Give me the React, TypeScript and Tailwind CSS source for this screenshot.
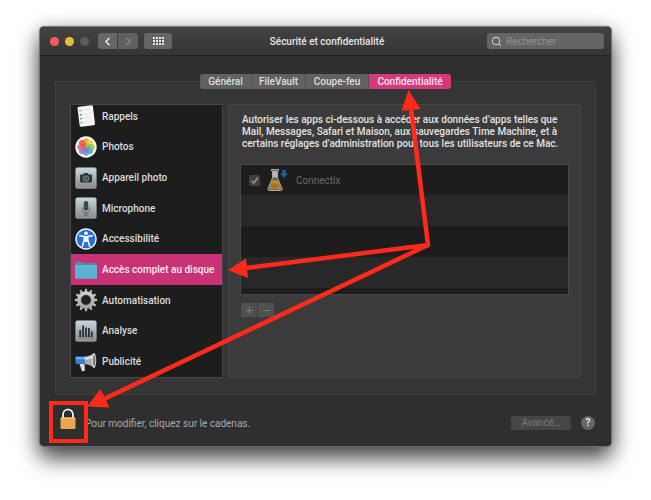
import { useId, useState, type ReactNode } from "react";
import { ChevronLeft, ChevronRight, Minus, Plus, Search } from "lucide-react";

const ONGLETS = [
  { nom: "Général", largeur: "w-[52px]" },
  { nom: "FileVault", largeur: "w-[54px]" },
  { nom: "Coupe-feu", largeur: "w-[63px]" },
  { nom: "Confidentialité", largeur: "w-[82px]" },
];

function IconeRappels() {
  return (
    <svg viewBox="0 0 24 24" className="size-6">
      <g transform="rotate(-7 12 12)">
        <rect x="4.5" y="2" width="15.5" height="20" rx="1.5" fill="#f6f6f4" />
        <path d="M9 6h8M9 10h8M9 14h8M9 18h8" stroke="#dcdcdc" strokeWidth=".7" />
        <circle cx="6.8" cy="6" r="1" fill="#ff9046" />
        <circle cx="6.8" cy="10" r="1" fill="#32a8ee" />
        <circle cx="6.8" cy="14" r="1" fill="#b06ae0" />
        <circle cx="6.8" cy="18" r="1" fill="#5ccb55" />
      </g>
    </svg>
  );
}

const PETALES = ["#f7a12b", "#d9d93a", "#8fc850", "#52b69a", "#5a92d6", "#8e77c4", "#cf6a9c", "#ee5a3c"];

function IconePhotos() {
  return (
    <svg viewBox="0 0 24 24" className="size-6">
      <circle cx="12" cy="12" r="10.7" fill="#f7f7f5" />
      {PETALES.map((couleur, i) => (
        <rect
          key={couleur}
          x="9.1"
          y="3.3"
          width="5.8"
          height="8.2"
          rx="2.9"
          fill={couleur}
          fillOpacity=".88"
          transform={`rotate(${i * 45} 12 12)`}
        />
      ))}
    </svg>
  );
}

function Tuile({ children }: { children: ReactNode }) {
  const id = useId();
  return (
    <svg viewBox="0 0 24 24" className="size-6">
      <defs>
        <linearGradient id={id} x1="0" y1="0" x2="0" y2="1">
          <stop offset="0" stopColor="#c8d7de" />
          <stop offset="1" stopColor="#85898a" />
        </linearGradient>
      </defs>
      <rect x="1.8" y="1.8" width="20.4" height="20.4" rx="1.5" fill={`url(#${id})`} stroke="#c0c9cc" strokeWidth=".6" />
      {children}
    </svg>
  );
}

function IconeAppareil() {
  return (
    <Tuile>
      <path d="M7 8.5h2.2l1-1.5h3.6l1 1.5H17a1 1 0 0 1 1 1v6a1 1 0 0 1-1 1H7a1 1 0 0 1-1-1v-6a1 1 0 0 1 1-1z" fill="#303638" />
      <circle cx="12" cy="12.4" r="3" fill="#8c9698" />
      <circle cx="12" cy="12.4" r="2.2" fill="#353b3d" />
      <circle cx="12" cy="12.4" r="1.1" fill="#707a7d" />
    </Tuile>
  );
}

function IconeMicrophone() {
  return (
    <Tuile>
      <rect x="9.8" y="5" width="4.4" height="9.5" rx="2.2" fill="#393d3f" />
      <path d="M10.5 7.5h3M10.5 9.5h3M10.5 11.5h3" stroke="#666d70" strokeWidth=".6" />
      <path d="M8.3 11.5v1.7a3.7 3.7 0 0 0 7.4 0v-1.7M12 17v2M9.5 19h5" fill="none" stroke="#5b6163" strokeWidth=".9" />
    </Tuile>
  );
}

function IconeAccessibilite() {
  return (
    <svg viewBox="0 0 24 24" className="size-6">
      <circle cx="12" cy="12" r="10.7" fill="#f2f7fc" />
      <circle cx="12" cy="12" r="9.3" fill="#286fdd" />
      <circle cx="12" cy="6.3" r="1.8" fill="#fff" />
      <path d="M5.8 8.7l4.4.7v3.5L8.4 19.2M18.2 8.7l-4.4.7v3.5l1.8 6.3" fill="none" stroke="#fff" strokeWidth="1.5" strokeLinecap="round" strokeLinejoin="round" />
      <path d="M10 9h4v4.5l-.8 1.5h-2.4L10 13.5z" fill="#fff" />
    </svg>
  );
}

function IconeDossier() {
  return (
    <svg viewBox="0 0 24 24" className="size-6">
      <path d="M1.2 5c0-.7.5-1.2 1.2-1.2h4.8c1 0 1.3 1.5 2.3 1.5h12c.7 0 1.2.5 1.2 1.2V9H1.2z" fill="#4394b4" />
      <path d="M1 7.5h22v12c0 .8-.5 1.3-1.3 1.3H2.3c-.8 0-1.3-.5-1.3-1.3z" fill="#5bb2d2" />
      <path d="M1 7.8h22" stroke="#7ac6de" strokeWidth=".7" />
    </svg>
  );
}

function IconeEngrenage() {
  const id = useId();
  return (
    <svg viewBox="0 0 24 24" className="size-6">
      <defs>
        <linearGradient id={id} gradientUnits="userSpaceOnUse" x1="0" y1="1" x2="0" y2="23">
          <stop offset="0" stopColor="#d8dee0" />
          <stop offset="1" stopColor="#969a9b" />
        </linearGradient>
      </defs>
      {Array.from({ length: 12 }, (_, i) => (
        <path key={i} d="M10.6 5L11.1.8h1.8l.5 4.2z" fill="#b9bfc1" transform={`rotate(${i * 30} 12 12)`} />
      ))}
      <circle cx="12" cy="12" r="6.7" fill="none" stroke={`url(#${id})`} strokeWidth="4" />
      <circle cx="12" cy="12" r="5" fill="#1f2020" stroke="#6d7375" strokeWidth=".7" />
    </svg>
  );
}

function IconeAnalyse() {
  return (
    <Tuile>
      <path d="M6.2 11v7.2M9.1 6.5v11.7M12 8.5v9.7M14.9 9v9.2M17.8 12.5v5.7" stroke="#2b3032" strokeWidth="1.8" />
    </Tuile>
  );
}

function IconePublicite() {
  return (
    <svg viewBox="0 0 24 24" className="size-6">
      <path d="M5.5 14h5l.5 6.500-3 1z" fill="#d8dcde" />
      <path d="M2.5 6.5h8V14h-8c-.7 0-1-.6-1-1.2V7.7c0-.7.4-1.2 1-1.2z" fill="#2b83dd" />
      <path d="M1.7 7.2h8.8v2H1.6z" fill="#6db8f5" />
      <path d="M10.500 6.5c4-.2 6.5-1.300 9.500-3.300v14.500c-3-2-5.500-3.500-9.500-3.700z" fill="#a7adaf" />
      <path d="M10.500 7.5c3.500-.2 6.500-1.300 9-3v3.600c-3 .9-5.500 1.400-9 1.600z" fill="#dce0e1" />
      <ellipse cx="20" cy="10.5" rx="2.2" ry="7.4" fill="#d5d9da" />
      <ellipse cx="20.2" cy="10.5" rx="1.2" ry="5.8" fill="#73797b" />
    </svg>
  );
}

function IconeConnectix() {
  return (
    <svg viewBox="0 0 24 24" className="size-6">
      <path d="M5.5 1.5h7V3h-1v7l4.5 10.300c.6 1.200 0 2.200-1.300 2.200H3.300c-1.300 0-1.900-1-1.300-2.200L6.500 10V3h-1z" fill="#5e5d59" stroke="#b4b4b0" strokeWidth=".9" />
      <path d="M6.800 3h4.400v6.500H6.800z" fill="#b4b4b0" />
      <path d="M6.400 12h5.200l3.200 7.500c.5 1.200.1 2-1 2H4.200c-1.100 0-1.500-.8-1-2z" fill="#a88934" />
      <path d="M4.500 18l3-3.500 1.800 2.500 2-1.500 2 3.700-3.200 1.800-3.800-.7z" fill="#b5702b" />
      <circle cx="8.800" cy="18.300" r="1.100" fill="#586d30" />
      <path d="M16.200 2h3.600v3.500H22l-4 4.500-4-4.500h2.200z" fill="#235f91" />
    </svg>
  );
}

function Cadenas() {
  return (
    <svg viewBox="0 0 16 22" className="h-[22px] w-4">
      <path d="M3 10V6.5a5 5 0 0 1 10 0V10" fill="none" stroke="#111" strokeWidth="3.4" />
      <path d="M3 10V6.5a5 5 0 0 1 10 0V10" fill="none" stroke="#dfe8f0" strokeWidth="2" />
      <rect x=".5" y="9.5" width="15" height="11.5" rx="1" fill="#eda953" />
      <path d="M1 10h14" stroke="#ffd08a" strokeWidth="1" />
      <path d="M1 13h14M1 16h14M1 19h14" stroke="#d99747" strokeWidth=".5" />
    </svg>
  );
}

const RUBRIQUES: { nom: string; icone: ReactNode }[] = [
  { nom: "Rappels", icone: <IconeRappels /> },
  { nom: "Photos", icone: <IconePhotos /> },
  { nom: "Appareil photo", icone: <IconeAppareil /> },
  { nom: "Microphone", icone: <IconeMicrophone /> },
  { nom: "Accessibilité", icone: <IconeAccessibilite /> },
  { nom: "Accès complet au disque", icone: <IconeDossier /> },
  { nom: "Automatisation", icone: <IconeEngrenage /> },
  { nom: "Analyse", icone: <IconeAnalyse /> },
  { nom: "Publicité", icone: <IconePublicite /> },
];

function BarreDeTitre() {
  return (
    <header className="grid h-[29px] grid-cols-[1fr_auto_1fr] items-center rounded-t-[4px] border-b border-[#242424] bg-linear-to-b from-[#424242] to-[#363636] pr-[7px] pl-[10px]">
      <div className="flex items-center">
        <div className="flex gap-1.5">
          <button type="button" aria-label="Fermer" className="size-[9px] rounded-full bg-[#fc5b57]" />
          <button type="button" aria-label="Réduire" className="size-[9px] rounded-full bg-[#e5bf3c]" />
          <button type="button" aria-label="Agrandir" disabled className="size-[9px] rounded-full bg-[#5c5c5c]" />
        </div>
        <div className="ml-[9px] flex gap-px">
          <button type="button" aria-label="Précédent" className="flex h-4 w-[19px] items-center justify-center rounded-l-[3px] bg-[#666] text-[#f0f0f0]">
            <ChevronLeft size={13} strokeWidth={2.5} />
          </button>
          <button type="button" aria-label="Suivant" disabled className="flex h-4 w-5 items-center justify-center rounded-r-[3px] bg-[#606060] text-[#8c8c8c]">
            <ChevronRight size={13} strokeWidth={2} />
          </button>
        </div>
        <button type="button" aria-label="Tout afficher" className="ml-1.5 flex h-4 w-7 items-center justify-center rounded-[3px] bg-[#656565]">
          <svg viewBox="0 0 11 8" className="h-2 w-[11px]" fill="#e8e8e8">
            {[0, 3, 6].map((y) =>
              [0, 3, 6, 9].map((x) => <rect key={`${x}-${y}`} x={x} y={y} width="2" height="2" />),
            )}
          </svg>
        </button>
      </div>
      <h1 className="font-medium text-[#e4e4e4]">Sécurité et confidentialité</h1>
      <label className="flex h-4 w-[117px] items-center gap-1 justify-self-end rounded-[3px] bg-[#646464] px-1 text-[#d0d0d0]">
        <Search size={11} strokeWidth={2.2} className="flex-none" />
        <input
          type="search"
          aria-label="Rechercher"
          placeholder="Rechercher"
          className="w-full min-w-0 bg-transparent text-white outline-none placeholder:text-[#929292]"
        />
      </label>
    </header>
  );
}

function Fleches() {
  return (
    <svg
      viewBox="0 0 651 500"
      className="pointer-events-none absolute top-0 left-0 h-[500px] w-[651px]"
      aria-hidden="true"
    >
      <g fill="none" stroke="#ff2a1b" strokeWidth="4.5" strokeLinejoin="round">
        <path d="M411 108L428 245L246 268" />
        <path d="M428 245L104 399" />
        <rect x="51" y="403" width="35" height="38" strokeWidth="4" strokeLinejoin="miter" />
      </g>
      <path d="M408.5 90L401.5 111L420.5 109zM228 270L246 258.5L248 278zM87 406.5L100.5 389L109.5 407.5z" fill="#ff2a1b" />
    </svg>
  );
}

export default function App() {
  const [onglet, setOnglet] = useState("Confidentialité");
  const [rubrique, setRubrique] = useState("Accès complet au disque");

  return (
    <div className="relative min-h-screen overflow-hidden bg-white px-10 pt-[27px] pb-[54px] font-[Roboto,'Liberation_Sans',sans-serif] text-[10px]">
      <main className="rounded-[4px] bg-[#2f2f2f] shadow-[0_0_1px_1px_#6e6e6e,0_12px_22px_rgba(0,0,0,0.7),0_2px_20px_rgba(0,0,0,0.25)]">
        <BarreDeTitre />

        <div className="px-[15px] pt-[18px]">
          <nav className="relative z-10 -mb-2 flex justify-center" aria-label="Onglets">
            <div className="flex overflow-hidden rounded-[3px]">
              {ONGLETS.map(({ nom, largeur }) => (
                <button
                  key={nom}
                  type="button"
                  aria-pressed={nom === onglet}
                  onClick={() => setOnglet(nom)}
                  className={`h-[15px] border-r border-[#505050] leading-[15px] font-medium whitespace-nowrap last:border-r-0 ${largeur} ${
                    nom === onglet ? "bg-[#d5397c] text-[#ffe4ef]" : "bg-[#616161] text-[#dedede]"
                  }`}
                >
                  {nom}
                </button>
              ))}
            </div>
          </nav>

          <section className="flex gap-[5px] rounded-[3px] border border-[#414141] bg-[#353535] px-[14px] pt-[22px] pb-4">
            <div className="h-[274px] w-[153px] flex-none overflow-hidden border border-[#464646] bg-[#1d1d1d]">
              {/* la liste est défilée de quelques pixels : la première rubrique est rognée */}
              <ul className="-mt-1 grid h-[276px] auto-rows-fr">
                {RUBRIQUES.map(({ nom, icone }) => (
                  <li key={nom} className="min-h-0">
                    <button
                      type="button"
                      aria-pressed={nom === rubrique}
                      onClick={() => setRubrique(nom)}
                      className={`flex h-full w-full items-center gap-1 pl-[3px] text-left font-medium whitespace-nowrap ${
                        nom === rubrique ? "bg-[#c93376] text-[#ffeaf3]" : "text-[#dcdcdc]"
                      }`}
                    >
                      {icone}
                      {nom}
                    </button>
                  </li>
                ))}
              </ul>
            </div>

            <div className="min-w-0 flex-1 rounded-[3px] border border-[#464646] bg-[#3b3b3b] px-[11px] pt-[9px]">
              <p className="px-0.5 leading-3 font-medium whitespace-nowrap text-[#e2e2e2]">
                Autoriser les apps ci-dessous à accéder aux données d’apps telles que
                <br />
                Mail, Messages, Safari et Maison, aux sauvegardes Time Machine, et à
                <br />
                certains réglages d’administration pour tous les utilisateurs de ce Mac.
              </p>

              <ul className="mt-[14px] h-[131px] overflow-hidden border border-[#484848] bg-[#1d1d1d]">
                <li className="flex h-[30px] items-center pl-2 text-[#6a6a6a]">
                  <label className="flex items-center">
                    <span className="relative flex size-[11px]">
                      <input
                        type="checkbox"
                        defaultChecked
                        disabled
                        className="size-[11px] appearance-none rounded-[2px] bg-[#414141]"
                      />
                      <svg viewBox="0 0 10 10" className="absolute inset-0 size-[11px]">
                        <path d="M2.5 5.2l1.9 2.2L7.8 2.5" fill="none" stroke="#9a9a9a" strokeWidth="1.3" />
                      </svg>
                    </span>
                    <span className="mx-1.5">
                      <IconeConnectix />
                    </span>
                    Connectix
                  </label>
                </li>
                <li className="h-[31px] bg-[#282828]" />
                <li className="h-[31px]" />
                <li className="h-[31px] bg-[#282828]" />
              </ul>

              <div className="mt-2 ml-px flex gap-px text-[#828282]">
                <button type="button" aria-label="Ajouter" disabled className="flex h-[14px] w-4 items-center justify-center rounded-l-[2px] bg-[#505050]">
                  <Plus size={11} strokeWidth={2} />
                </button>
                <button type="button" aria-label="Supprimer" disabled className="flex h-[14px] w-4 items-center justify-center rounded-r-[2px] bg-[#505050]">
                  <Minus size={11} strokeWidth={2} />
                </button>
              </div>
            </div>
          </section>
        </div>

        <footer className="flex h-[51px] items-center pr-4 pl-5">
          <button type="button" aria-label="Déverrouiller" className="mb-1">
            <Cadenas />
          </button>
          <p className="ml-[9px] pt-1.5 text-[#a9a9a9]">Pour modifier, cliquez sur le cadenas.</p>
          <button type="button" disabled className="mt-1 ml-auto h-[14px] w-[60px] rounded-[2px] bg-[#464646] leading-[14px] text-[#777]">
            Avancé…
          </button>
          <button type="button" aria-label="Aide" className="mt-1 ml-[10px] size-[14px] rounded-full bg-[#666] leading-[14px] font-semibold text-[#eee]">
            ?
          </button>
        </footer>
      </main>

      <Fleches />
    </div>
  );
}
